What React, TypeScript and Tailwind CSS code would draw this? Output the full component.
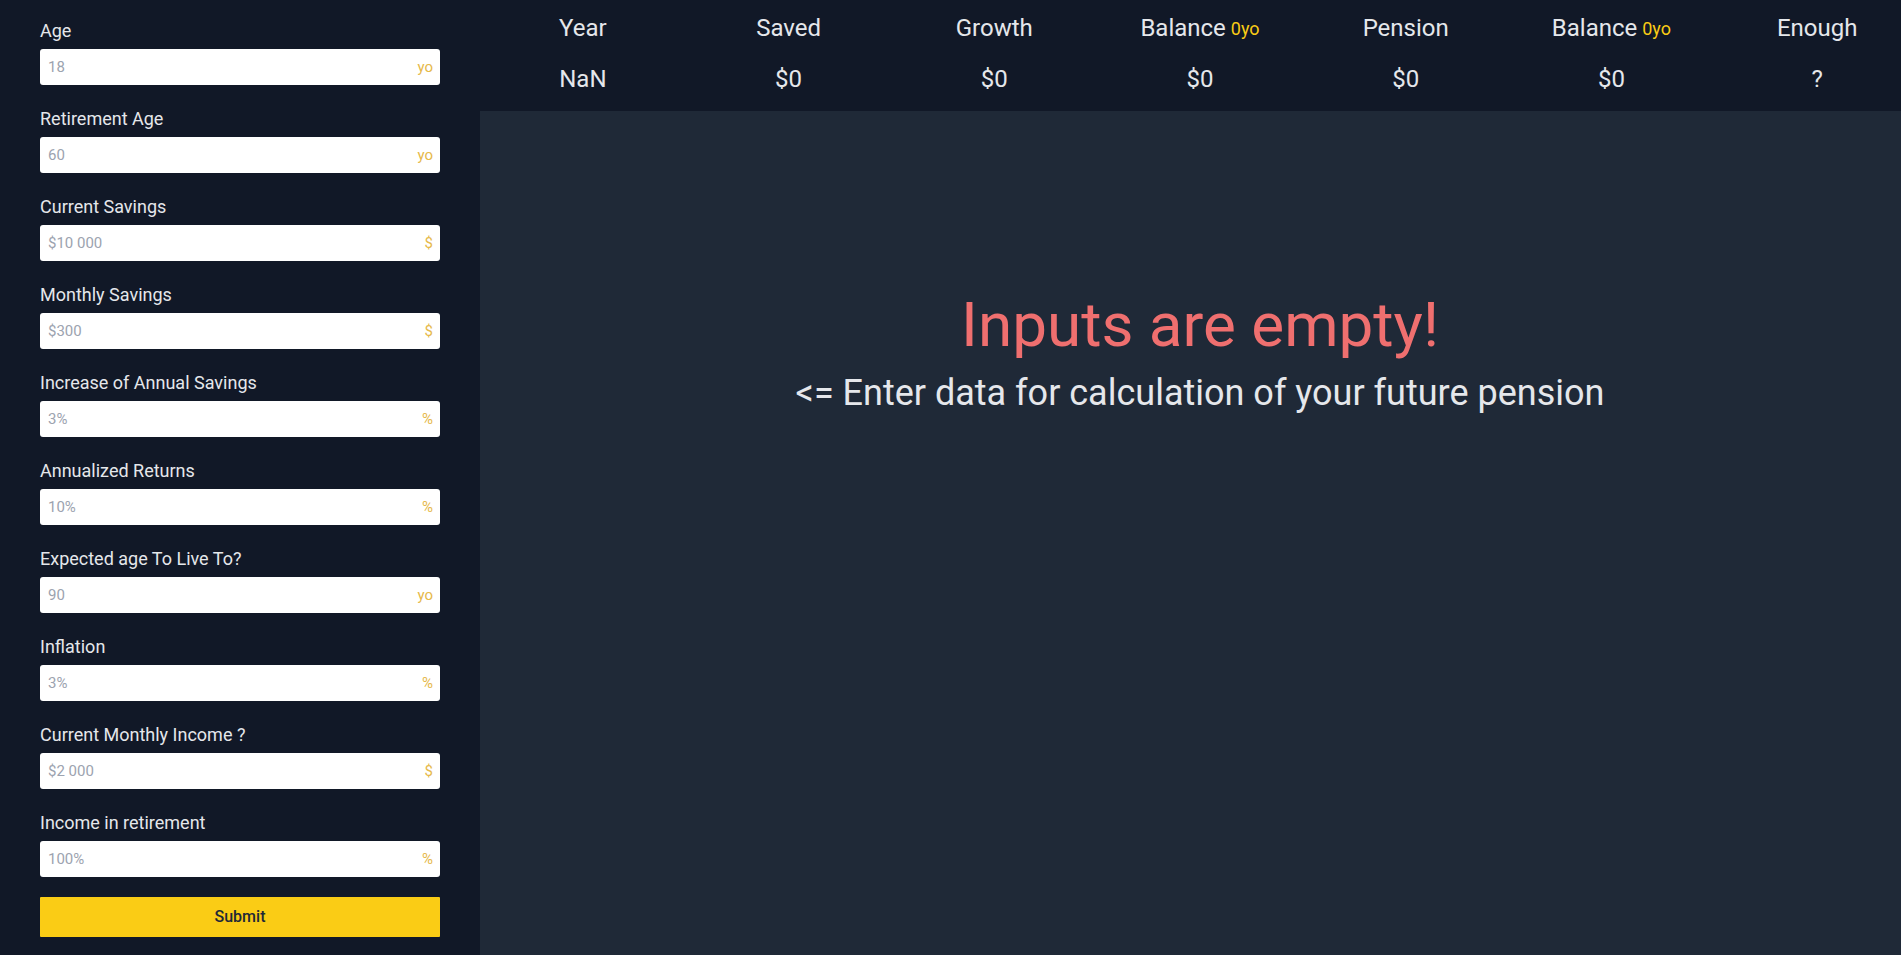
import React from 'react'

type Field = { label: string; placeholder: string; unit: string }

const FIELDS: Field[] = [
  { label: 'Age', placeholder: '18', unit: 'yo' },
  { label: 'Retirement Age', placeholder: '60', unit: 'yo' },
  { label: 'Current Savings', placeholder: '$10 000', unit: '$' },
  { label: 'Monthly Savings', placeholder: '$300', unit: '$' },
  { label: 'Increase of Annual Savings', placeholder: '3%', unit: '%' },
  { label: 'Annualized Returns', placeholder: '10%', unit: '%' },
  { label: 'Expected age To Live To?', placeholder: '90', unit: 'yo' },
  { label: 'Inflation', placeholder: '3%', unit: '%' },
  { label: 'Current Monthly Income ?', placeholder: '$2 000', unit: '$' },
  { label: 'Income in retirement', placeholder: '100%', unit: '%' },
]

const COLUMNS: { title: string; suffix?: string; value: string }[] = [
  { title: 'Year', value: 'NaN' },
  { title: 'Saved', value: '$0' },
  { title: 'Growth', value: '$0' },
  { title: 'Balance', suffix: '0yo', value: '$0' },
  { title: 'Pension', value: '$0' },
  { title: 'Balance', suffix: '0yo', value: '$0' },
  { title: 'Enough', value: '?' },
]

const Sidebar: React.FC = () => (
  <aside className="w-[480px] shrink-0 bg-[#111827] px-10 pt-[19px] pb-[18px]">
    <form className="flex flex-col gap-[22px]" onSubmit={(e) => e.preventDefault()}>
      {FIELDS.map((f) => (
        <div key={f.label}>
          <label className="block text-[18px] leading-[24px] mb-[6px] text-[#e5e7eb]">{f.label}</label>
          <div className="relative">
            <input
              type="text"
              placeholder={f.placeholder}
              className="w-full h-9 rounded-[3px] bg-white pl-2 pr-8 text-[15px] text-gray-800 placeholder:text-[#9ca3af] focus:outline-none"
            />
            <span className="absolute right-[7px] top-1/2 -translate-y-1/2 text-[15px] text-[#e6b94a]">{f.unit}</span>
          </div>
        </div>
      ))}
    </form>
    <button className="mt-5 w-full h-10 bg-[#facc15] text-[16px] font-medium text-[#1f2937] rounded-[1px]">
      Submit
    </button>
  </aside>
)

const Results: React.FC = () => (
  <main className="flex-1 min-w-0 bg-[#1f2937] overflow-hidden">
    <div className="w-[1440px]">
      <div className="bg-[#111827] h-[111px] grid grid-cols-7 grid-rows-[54px_57px] text-[#e5e7eb]">
        {COLUMNS.map((c, i) => (
          <div key={`h${i}`} className="flex items-center justify-center pt-[2px] text-[24px]">
            {c.title}
            {c.suffix && <span className="ml-[5px] text-[18px] text-[#facc15]">{c.suffix}</span>}
          </div>
        ))}
        {COLUMNS.map((c, i) => (
          <div key={`v${i}`} className="flex items-center justify-center pb-[8px] text-[24px]">
            {c.value}
          </div>
        ))}
      </div>
      <div className="flex flex-col items-center pt-[183px]">
        <h1 className="text-[62px] leading-none text-[#ef6f6f]">Inputs are empty!</h1>
        <p className="mt-[19px] text-[36px] leading-none text-[#e5e7eb]">
          {'<= Enter data for calculation of your future pension'}
        </p>
      </div>
    </div>
  </main>
)

export default function App() {
  return (
    <div className="flex min-h-screen font-['Roboto',sans-serif]">
      <Sidebar />
      <Results />
    </div>
  )
}
